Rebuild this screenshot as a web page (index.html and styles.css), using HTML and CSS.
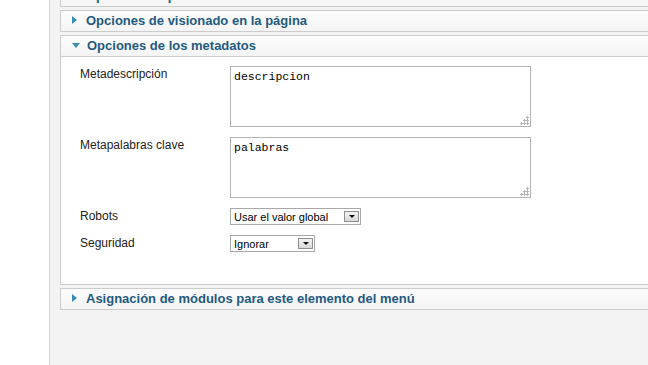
FILE: index.html
```html
<!DOCTYPE html>
<html lang="es">
<head>
    <meta charset="UTF-8">
    <title>Opciones del elemento del menú</title>
    <link rel="stylesheet" href="styles.css">
</head>
<body>
    <div class="page">
        <div class="side"></div>
        <div class="main">
            <div class="panel first">
                <h3 class="toggler"><span class="arrow right"></span>Opciones de parámetros</h3>
            </div>
            <div class="panel">
                <h3 class="toggler"><span class="arrow right"></span>Opciones de visionado en la página</h3>
            </div>
            <div class="panel open">
                <h3 class="toggler"><span class="arrow down"></span>Opciones de los metadatos</h3>
                <div class="content">
                    <div class="row">
                        <label for="metadesc">Metadescripción</label>
                        <textarea id="metadesc" class="box">descripcion</textarea>
                    </div>
                    <div class="row">
                        <label for="metakey">Metapalabras clave</label>
                        <textarea id="metakey" class="box">palabras</textarea>
                    </div>
                    <div class="row">
                        <label>Robots</label>
                        <div class="select wide"><span class="value">Usar el valor global</span><span class="btn"></span></div>
                    </div>
                    <div class="row">
                        <label>Seguridad</label>
                        <div class="select"><span class="value">Ignorar</span><span class="btn"></span></div>
                    </div>
                </div>
            </div>
            <div class="panel">
                <h3 class="toggler"><span class="arrow right"></span>Asignación de módulos para este elemento del menú</h3>
            </div>
        </div>
    </div>
</body>
</html>
```

FILE: styles.css
```css
html, body {
    margin: 0;
    padding: 0;
    height: 100%;
    overflow: hidden;
    background-color: #fff;
    font-family: "Liberation Sans", Arial, sans-serif;
}
.page {
    display: flex;
    height: 100%;
}
.side {
    width: 49px;
    flex: none;
    background-color: #fff;
    border-right: 1px solid #d6d6d6;
}
.main {
    flex: 1;
    background-color: #f3f3f3;
    padding-left: 10px;
    overflow: hidden;
}
.panel {
    width: 640px;
    margin-bottom: 3px;
    border: 1px solid #cccccc;
    border-right: none;
    background-color: #fff;
}
.panel.first {
    margin-top: -15px;
}
.toggler {
    margin: 0;
    height: 20px;
    line-height: 20px;
    padding-left: 11px;
    font-size: 13px;
    font-weight: bold;
    color: #1f5a80;
    background: linear-gradient(#fcfcfc, #f4f4f4);
    white-space: nowrap;
}
.open .toggler {
    border-bottom: 1px solid #cccccc;
}
.arrow {
    display: inline-block;
    width: 0;
    height: 0;
    margin-right: 9px;
    vertical-align: 1px;
}
.arrow.right {
    border-top: 4px solid transparent;
    border-bottom: 4px solid transparent;
    border-left: 5px solid #3a8db3;
}
.arrow.down {
    border-left: 4px solid transparent;
    border-right: 4px solid transparent;
    border-top: 5px solid #3a8db3;
    vertical-align: 2px;
    margin-right: 7px;
}
.content {
    padding: 9px 0 32px 19px;
    display: flex;
    flex-direction: column;
    gap: 10px;
}
.row {
    display: flex;
    align-items: flex-start;
}
.row label {
    width: 150px;
    flex: none;
    font-size: 12px;
    color: #222;
    padding-top: 1px;
}
.box {
    width: 293px;
    height: 53px;
    margin: 0;
    padding: 3px;
    border: 1px solid #b4b4b4;
    font-family: "Liberation Mono", "Courier New", monospace;
    font-size: 11.5px;
    color: #000;
    resize: none;
    background-color: #fff;
    /* grip de puntos abajo a la derecha */
    background-image:
        radial-gradient(circle, #b5b5b5 1px, transparent 1.2px),
        radial-gradient(circle, #b5b5b5 1px, transparent 1.2px),
        radial-gradient(circle, #b5b5b5 1px, transparent 1.2px),
        radial-gradient(circle, #b5b5b5 1px, transparent 1.2px),
        radial-gradient(circle, #b5b5b5 1px, transparent 1.2px),
        radial-gradient(circle, #b5b5b5 1px, transparent 1.2px);
    background-size: 3px 3px;
    background-repeat: no-repeat;
    background-position:
        right 1px bottom 7px,
        right 1px bottom 4px,
        right 4px bottom 4px,
        right 1px bottom 1px,
        right 4px bottom 1px,
        right 7px bottom 1px;
}
.select {
    display: flex;
    align-items: center;
    justify-content: space-between;
    width: 129px;
    height: 15px;
    border: 1px solid #a8a8a8;
    background-color: #fff;
    font-size: 11px;
    color: #000;
    box-sizing: content-box;
}
.select:not(.wide) {
    width: 83px;
}
.select .value {
    padding-left: 3px;
    white-space: nowrap;
}
.select .btn {
    position: relative;
    width: 15px;
    height: 11px;
    margin-right: 1px;
    border: 1px solid #8f8f8f;
    background: linear-gradient(#f4f4f4, #d8d8d8);
    box-sizing: border-box;
}
.select .btn::after {
    content: "";
    position: absolute;
    left: 4px;
    top: 3px;
    border-left: 3px solid transparent;
    border-right: 3px solid transparent;
    border-top: 3px solid #111;
}
```
